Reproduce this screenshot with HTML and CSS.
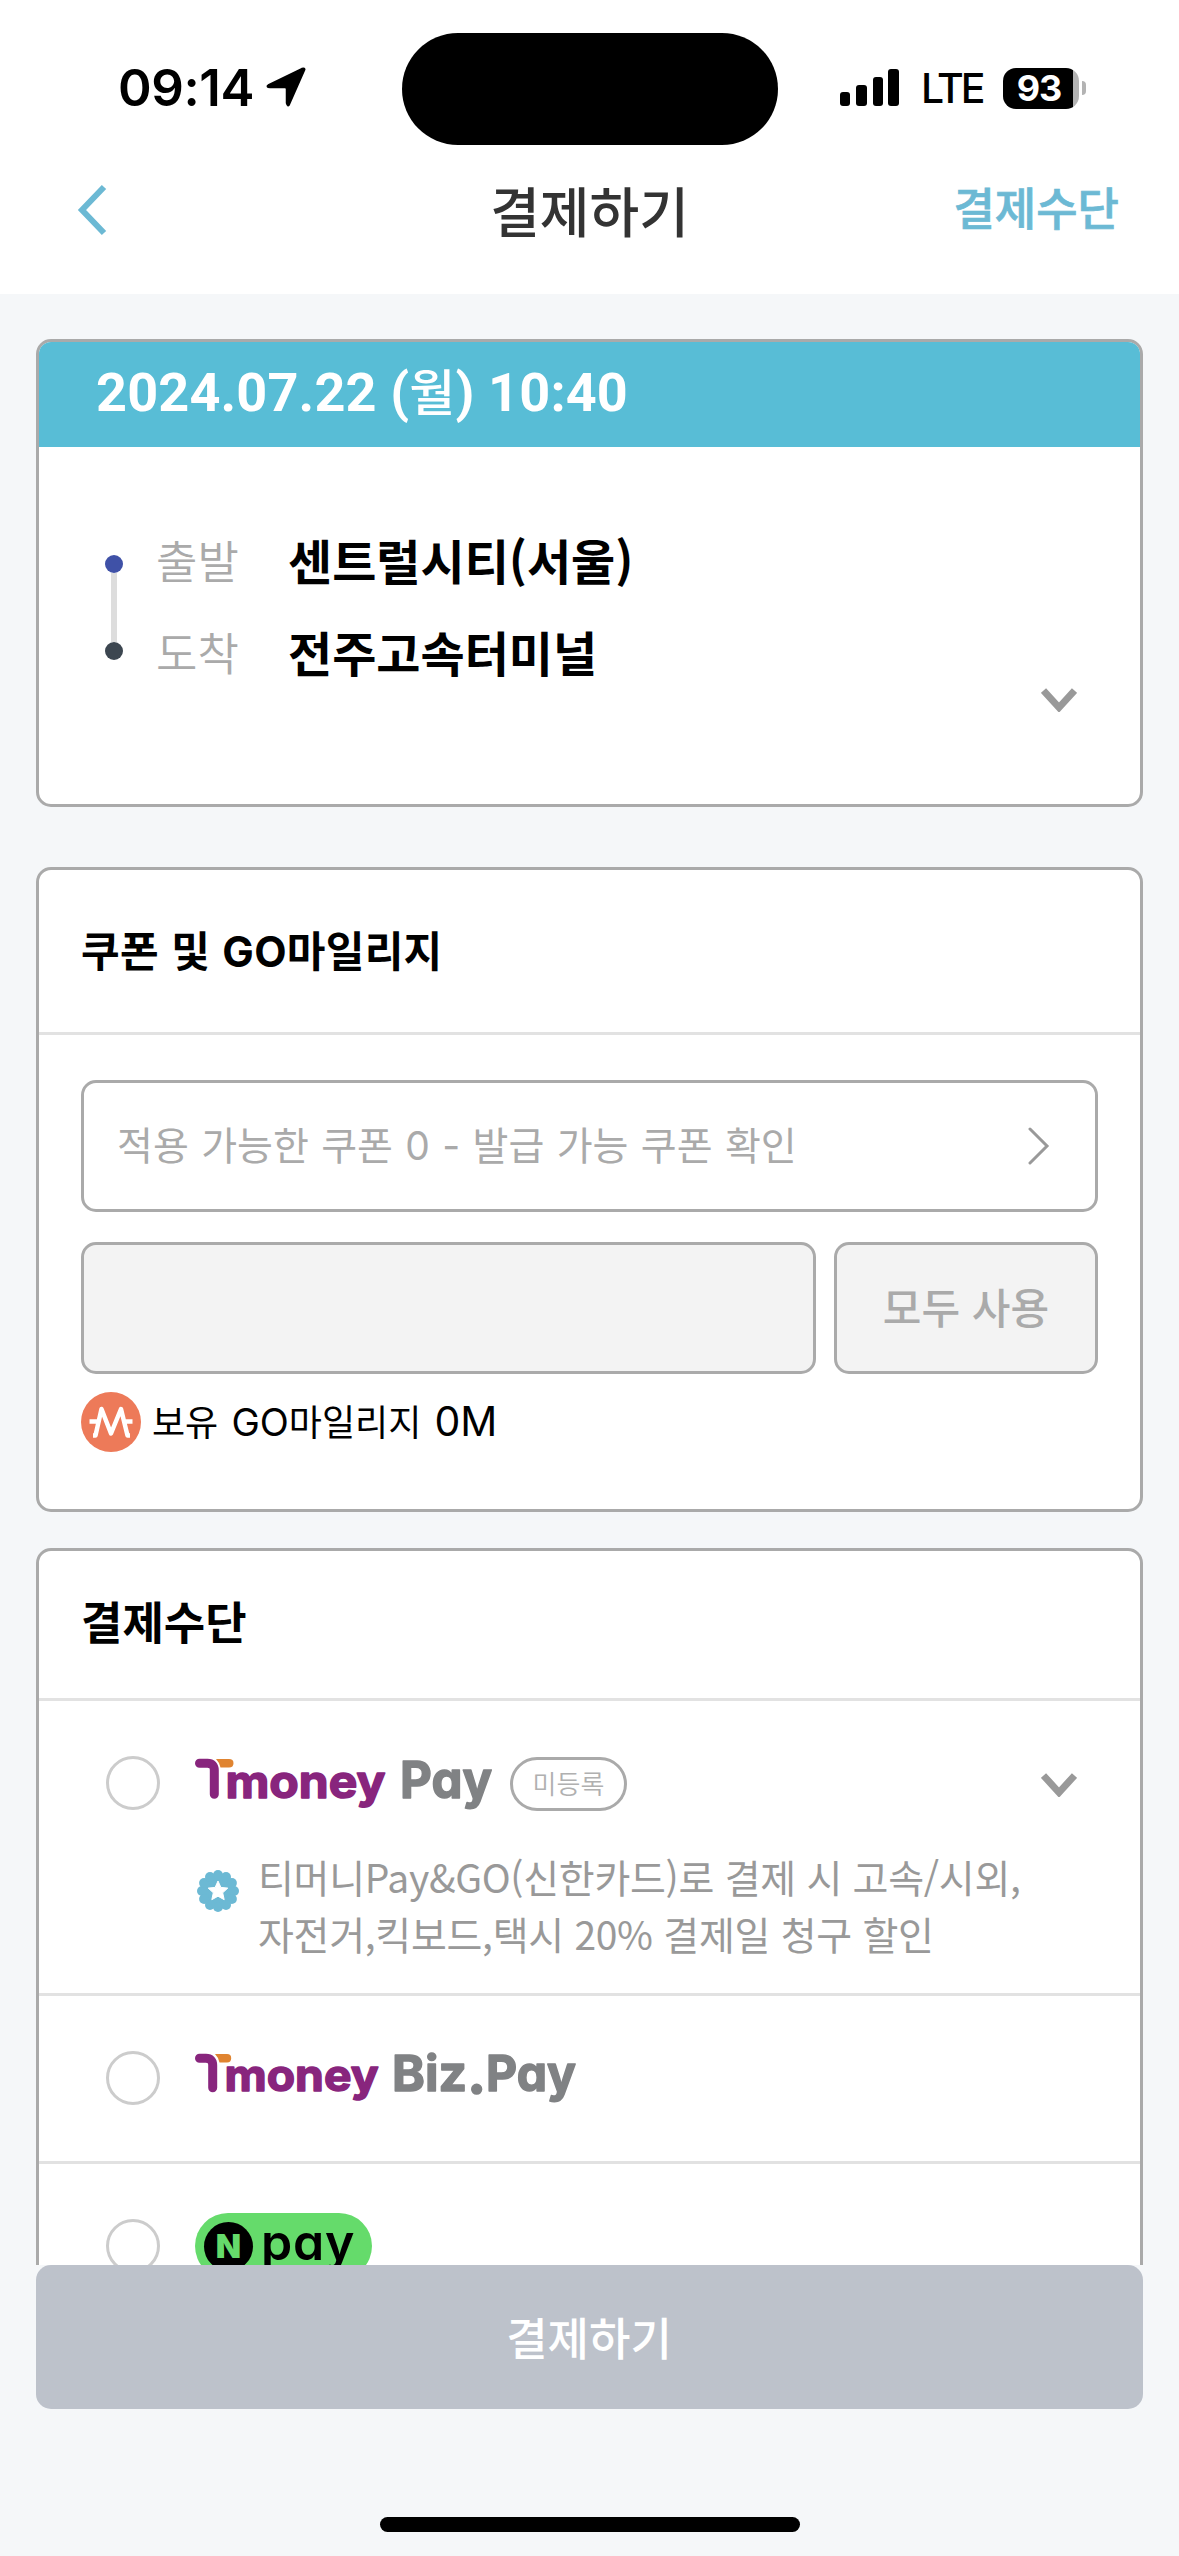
FILE: index.html
```html
<!DOCTYPE html>
<html lang="ko">
<head>
<meta charset="utf-8">
<title>결제하기</title>
<link rel="stylesheet" href="styles.css">
</head>
<body>
<div class="screen">
  <div class="status">
    <div class="status-left">
      <span class="clock">09:14</span>
      <svg class="location" width="42" height="42" viewBox="0 0 42 42"><path d="M39 3 24 37q-1 3-2-1V22q0-2-2-2H5q-4 0-1-2L37 2q3-1 2 1z"/></svg>
    </div>
    <div class="island"></div>
    <div class="status-right">
      <svg class="signal" width="60" height="38" viewBox="0 0 60 38"><rect y="23" width="10" height="14" rx="3"/><rect x="16" y="16" width="11" height="21" rx="3"/><rect x="33" y="8" width="10" height="29" rx="3"/><rect x="48" width="11" height="37" rx="3"/></svg>
      <span class="network">LTE</span>
      <span class="battery"><span class="level">93</span></span><span class="nub"></span>
    </div>
  </div>
  <header class="nav">
    <svg class="back" width="32" height="52" viewBox="0 0 32 52"><path d="M27 3 5 26l22 23"/></svg>
    <h1 class="nav-title">결제하기</h1>
    <a class="nav-link">결제수단</a>
  </header>
  <main class="content">
    <section class="card trip">
      <div class="trip-date">2024.07.22 (<span class="weekday">월</span>) 10:40</div>
      <div class="trip-body">
        <div class="route-line"><i class="dot from"></i><i class="bar"></i><i class="dot to"></i></div>
        <div class="stops">
          <div class="stop"><span class="label">출발</span><b class="name">센트럴시티(서울)</b></div>
          <div class="stop"><span class="label">도착</span><b class="name">전주고속터미널</b></div>
        </div>
        <svg class="chevron trip-chevron" width="36" height="24" viewBox="0 0 36 24"><path d="m2.500 2.500 15.500 17 15.500-17"/></svg>
      </div>
    </section>
    <section class="card coupon">
      <h2 class="coupon-title">쿠폰 및 GO마일리지</h2>
      <div class="coupon-body">
        <div class="coupon-select"><span>적용 가능한 쿠폰 0 - 발급 가능 쿠폰 확인</span>
          <svg class="arrow" width="22" height="38" viewBox="0 0 22 38"><path d="m2 2 17 17L2 36"/></svg>
        </div>
        <div class="mileage-row"><div class="mileage-input"></div><div class="use-all">모두 사용</div></div>
        <div class="mileage-have">
          <svg width="60" height="60" viewBox="0 0 60 60"><circle cx="30" cy="30" r="30" fill="#ed7a59"/><path d="M8.500 29.500H17m26 0h8.500M12 43.500h2.500L20.500 17 30 41.500 40 17l6.500 26.500H49" fill="none" stroke="#fff" stroke-width="4.500" stroke-linejoin="round"/></svg>
          <span>보유 <span class="go">GO</span>마일리지 <span class="amount">0M</span></span>
        </div>
      </div>
    </section>
    <section class="card methods">
      <h2 class="methods-title">결제수단</h2>
      <div class="method first">
        <div class="method-head">
          <i class="radio"></i>
          <svg class="logo" width="300" height="60" viewBox="0 0 300 60">
            <path class="t-side" d="M21 6h13q4.500 0 4.500 4.200t-4.500 4.300h-8.500q-1-5-4.500-8.500z"/>
            <path class="t-main" d="M4.500 10.300h8q6.800 0 6.800 7v24"/>
            <text class="brand" x="30.500" y="44.700" font-size="45" textLength="160" lengthAdjust="spacingAndGlyphs">money</text>
            <text class="brand grey" x="205" y="44.700" font-size="51" textLength="92" lengthAdjust="spacingAndGlyphs">Pay</text>
          </svg>
          <span class="tag">미등록</span>
          <svg class="chevron pay-chevron" width="36" height="24" viewBox="0 0 36 24"><path d="m2.500 2.500 15.500 17 15.500-17"/></svg>
        </div>
        <div class="promo">
          <svg class="seal" width="42" height="42" viewBox="-21 -21 42 42">
            <circle r="17.500"/>
            <circle cy="-16" r="5"/><circle cy="16" r="5"/><circle cx="-16" r="5"/><circle cx="16" r="5"/>
            <circle cx="8" cy="-13.900" r="5"/><circle cx="13.900" cy="-8" r="5"/><circle cx="13.900" cy="8" r="5"/><circle cx="8" cy="13.900" r="5"/>
            <circle cx="-8" cy="13.900" r="5"/><circle cx="-13.900" cy="8" r="5"/><circle cx="-13.900" cy="-8" r="5"/><circle cx="-8" cy="-13.900" r="5"/>
            <path class="star" d="M0-10 2.900-3.600 9.800-2.900 4.700 1.800 6.200 8.700 0 5.200-6.200 8.700-4.700 1.800-9.800-2.900-2.900-3.600z"/>
          </svg>
          <p>티머니Pay&amp;GO(신한카드)로 결제 시 고속/시외,<br>자전거,킥보드,택시 20% 결제일 청구 할인</p>
        </div>
      </div>
      <div class="method second">
        <div class="method-head">
          <i class="radio"></i>
          <svg class="logo" width="385" height="60" viewBox="0 0 385 60">
            <path class="t-side" d="M20 6h12q4.200 0 4.200 4.200T32 14.500h-7.500q-1-5-4.500-8.500z"/>
            <path class="t-main" d="M4.500 10.300h6.500q6.700 0 6.700 7v22.500"/>
            <text class="brand" x="29.500" y="43.200" font-size="44" textLength="154" lengthAdjust="spacingAndGlyphs">money</text>
            <text class="brand grey" x="197" y="43.200" font-size="50" textLength="75" lengthAdjust="spacingAndGlyphs">Biz</text>
            <text class="brand grey" x="272" y="45" font-size="58">.</text>
            <text class="brand grey" x="291" y="43.200" font-size="50" textLength="90" lengthAdjust="spacingAndGlyphs">Pay</text>
          </svg>
        </div>
      </div>
      <div class="method third">
        <div class="method-head">
          <i class="radio"></i>
          <div class="npay"><span class="npay-n">N</span><span class="npay-text">pay</span></div>
        </div>
      </div>
    </section>
  </main>
  <footer class="bottom"><button class="pay">결제하기</button><div class="home"></div></footer>
</div>
</body>
</html>
```
FILE: styles.css
```css
* { box-sizing: border-box; }
body { margin: 0; background: #f5f7f9; font-family: "Noto Sans CJK KR", sans-serif; color: #000; }
h1, h2, p { margin: 0; }
i { font-style: normal; }
.screen { width: 1179px; height: 2556px; display: flex; flex-direction: column; overflow: hidden; }
.status { height: 150px; background: #fff; display: flex; justify-content: space-between; align-items: flex-start; padding: 33px 93px 0 118px; flex: none; }
.status-left { width: 284px; height: 110px; display: flex; align-items: center; gap: 11px; font: 600 51px/60px Inter, sans-serif; }
.clock { width: 136px; letter-spacing: -.4px; }
.location { stroke: #000; stroke-width: 2.5; stroke-linejoin: round; }
.island { width: 376px; height: 112px; border-radius: 56px; background: #000; }
.status-right { width: 308px; height: 110px; display: flex; align-items: center; justify-content: flex-end; font-family: Inter, sans-serif; }
.network { font: 500 41px/60px Inter, sans-serif; width: 60px; margin: 0 22px 0 21px; letter-spacing: -3.2px; }
.battery { width: 76px; height: 41px; border-radius: 13px; background: linear-gradient(90deg, #000 70px, #b3b3b3 70px); color: #fff; display: flex; align-items: center; }
.level { width: 72px; text-align: center; font: 700 36px/41px Inter, sans-serif; letter-spacing: -1px; }
.nub { width: 4px; height: 14px; margin-left: 3px; border-radius: 0 4px 4px 0; background: #b3b3b3; }
.nav { height: 144px; flex: none; background: #fff; display: grid; grid-template-columns: 1fr auto 1fr; align-items: start; padding: 0 60px 0 77px; }
.back { margin-top: 34px; fill: none; stroke: #6cb9d4; stroke-width: 6; }
.nav-title { font-size: 54px; font-weight: 500; line-height: 80px; margin-top: 20px; margin-left: -17px; color: #333; }
.nav-link { justify-self: end; font-size: 45px; font-weight: 500; line-height: 70px; margin-top: 22px; color: #6cb9d4; -webkit-text-stroke: .7px #6cb9d4; }
.content { flex: none; height: 1971px; padding: 45px 36px 0; overflow: hidden; }
.card { background: #fff; border: 3px solid #aaa; border-radius: 15px; overflow: hidden; }
.trip { height: 468px; }
.trip-date { height: 105px; padding-left: 57px; background: #58bdd6; color: #fff; font: 700 54px/102px Roboto, "Noto Sans CJK KR", sans-serif; letter-spacing: .15px; }
.weekday { font-size: 50px; line-height: 60px; font-weight: 500; }
.trip-body { display: flex; padding: 74px 63px 0 66px; }
.route-line { display: flex; flex-direction: column; align-items: center; width: 18px; margin-top: 34px; }
.dot { width: 18px; height: 18px; border-radius: 50%; }
.from { background: #3f51a7; }
.to { background: #3c4650; }
.bar { width: 6px; height: 69px; background: #ddd; }
.stops { flex: 1; padding-left: 33px; margin-top: -8px; }
.stop { display: flex; height: 92px; align-items: center; }
.label { width: 132px; font-size: 45px; font-weight: 350; color: #aaa; }
.name { font-size: 48px; }
.chevron { fill: none; stroke: #999; stroke-width: 7; }
.trip-chevron { margin-top: 167px; }
.coupon { height: 645px; margin-top: 60px; }
.coupon-title { height: 165px; border-bottom: 3px solid #e2e2e2; padding-left: 42px; font: 700 42px/163px Inter, "Noto Sans CJK KR", sans-serif; letter-spacing: .3px; word-spacing: 2px; }
.coupon-body { padding: 45px 42px 0; }
.coupon-select { height: 132px; border: 3px solid #aaa; border-radius: 15px; display: flex; align-items: center; justify-content: space-between; padding: 0 45px 0 33px; font: 400 39px/60px Inter, "Noto Sans CJK KR", sans-serif; word-spacing: 1.4px; color: #aaa; }
.arrow { fill: none; stroke: #999; stroke-width: 3; stroke-linecap: round; }
.mileage-row { display: grid; grid-template-columns: 735px 264px; gap: 18px; margin-top: 30px; }
.mileage-input, .use-all { height: 132px; border: 3px solid #aaa; border-radius: 15px; background: #f3f3f3; }
.use-all { text-align: center; font: 500 42px/121px "Noto Sans CJK KR", sans-serif; color: #aaa; }
.mileage-have { display: flex; align-items: center; gap: 11px; height: 60px; margin-top: 18px; font: 400 36px/60px Inter, "Noto Sans CJK KR", sans-serif; word-spacing: 3px; }
.go { font-size: 38px; }
.amount { font-size: 41px; }
.methods { height: 900px; margin-top: 36px; }
.methods-title { height: 150px; border-bottom: 3px solid #e2e2e2; padding-left: 42px; font-size: 45px; line-height: 140px; }
.method { border-bottom: 3px solid #e2e2e2; padding: 0 63px 0 67px; }
.method-head { display: flex; align-items: center; height: 54px; }
.first { height: 295px; padding-top: 55px; }
.second { height: 168px; padding-top: 55px; }
.third { padding-top: 55px; height: 170px; }
.radio { width: 54px; height: 54px; border: 3px solid #ccc; border-radius: 50%; margin-right: 35px; flex: none; }
.logo { flex: none; overflow: visible; }
.t-main { fill: none; stroke: #88257d; stroke-width: 9; stroke-linecap: round; }
.t-side { fill: #e08430; }
.brand { font-family: Inter, sans-serif; font-weight: 700; font-feature-settings: "cv11"; fill: #88257d; stroke: #88257d; stroke-width: 1.5; stroke-linejoin: round; }
.grey { fill: #808284; stroke: #808284; }
.tag { width: 117px; height: 54px; border: 3px solid #aaa; border-radius: 27px; text-align: center; font-size: 26px; font-weight: 350; line-height: 46px; color: #b0b0b0; margin: 1px auto 0 15px; }
.pay-chevron { margin-top: 3px; }
.promo { display: flex; margin: 22px 0 0 91px; }
.seal { margin-top: 38px; fill: #6cb9d4; }
.star { fill: #fff; stroke: #fff; stroke-width: 1; stroke-linejoin: round; }
.promo p { margin: 16px 0 0 19px; font-size: 39px; line-height: 57px; letter-spacing: -.3px; color: #999; white-space: nowrap; }
.npay { width: 177px; height: 66px; border-radius: 33px; background: #65db6b; display: flex; align-items: center; padding-left: 9px; }
.npay-n { width: 49px; height: 49px; border-radius: 50%; background: #000; color: #65db6b; text-align: center; font: 900 33px/49px Inter, sans-serif; }
.npay-text { font: 600 50px/60px Inter, sans-serif; font-feature-settings: "cv11"; letter-spacing: .8px; margin-left: 8px; margin-top: -8px; }
.bottom { display: flex; flex-direction: column; align-items: center; padding: 0 36px; }
.pay { width: 1107px; height: 144px; border: 0; border-radius: 15px; background: #bdc2cb; color: #fff; font: 500 45px/140px "Noto Sans CJK KR", sans-serif; padding: 0 1px 1px 0; }
.home { width: 420px; height: 15px; border-radius: 8px; background: #000; margin-top: 108px; }
```
